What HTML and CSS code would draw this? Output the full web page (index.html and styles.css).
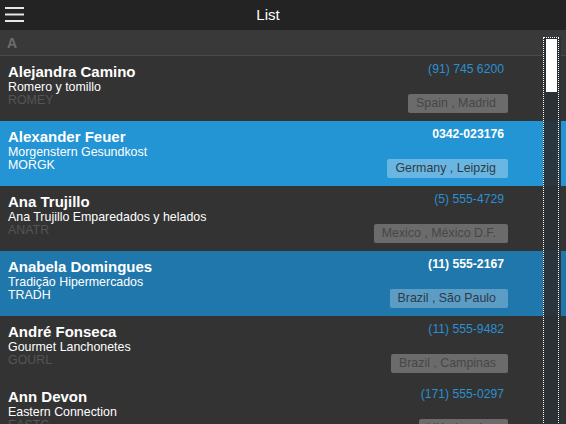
FILE: index.html
```html
<!DOCTYPE html>
<html>
<head>
<meta charset="utf-8">
<link rel="stylesheet" href="styles.css">
</head>
<body>
<div class="topbar">
  <div class="menu-btn">
    <svg width="20" height="18" viewBox="0 0 20 18"><rect x="0" y="1" width="19" height="2" fill="#e6e6e6"/><rect x="0" y="7.5" width="19" height="2" fill="#e6e6e6"/><rect x="0" y="14" width="19" height="2" fill="#e6e6e6"/></svg>
  </div>
  <div class="title">List</div>
</div>
<div class="list">
  <div class="group-header">A</div>

  <div class="row">
    <div class="info"><div class="name">Alejandra Camino</div><div class="company">Romero y tomillo</div><div class="code">ROMEY</div></div>
    <div class="side"><div class="phone">(91) 745 6200</div><div class="pill">Spain , Madrid</div></div>
    <svg class="chev" width="6" height="10" viewBox="0 0 6 10"><path d="M1 1 L5 5 L1 9" fill="none" stroke="#4c4c4c" stroke-width="1.5"/></svg>
  </div>

  <div class="row selected">
    <div class="info"><div class="name">Alexander Feuer</div><div class="company">Morgenstern Gesundkost</div><div class="code">MORGK</div></div>
    <div class="side"><div class="phone">0342-023176</div><div class="pill">Germany , Leipzig</div></div>
    <svg class="chev" width="6" height="10" viewBox="0 0 6 10"><path d="M1 1 L5 5 L1 9" fill="none" stroke="#4c4c4c" stroke-width="1.5"/></svg>
  </div>

  <div class="row">
    <div class="info"><div class="name">Ana Trujillo</div><div class="company">Ana Trujillo Emparedados y helados</div><div class="code">ANATR</div></div>
    <div class="side"><div class="phone">(5) 555-4729</div><div class="pill">Mexico , México D.F.</div></div>
    <svg class="chev" width="6" height="10" viewBox="0 0 6 10"><path d="M1 1 L5 5 L1 9" fill="none" stroke="#4c4c4c" stroke-width="1.5"/></svg>
  </div>

  <div class="row hover">
    <div class="info"><div class="name">Anabela Domingues</div><div class="company">Tradição Hipermercados</div><div class="code">TRADH</div></div>
    <div class="side"><div class="phone">(11) 555-2167</div><div class="pill">Brazil , São Paulo</div></div>
    <svg class="chev" width="6" height="10" viewBox="0 0 6 10"><path d="M1 1 L5 5 L1 9" fill="none" stroke="#4c4c4c" stroke-width="1.5"/></svg>
  </div>

  <div class="row">
    <div class="info"><div class="name">André Fonseca</div><div class="company">Gourmet Lanchonetes</div><div class="code">GOURL</div></div>
    <div class="side"><div class="phone">(11) 555-9482</div><div class="pill">Brazil , Campinas</div></div>
    <svg class="chev" width="6" height="10" viewBox="0 0 6 10"><path d="M1 1 L5 5 L1 9" fill="none" stroke="#4c4c4c" stroke-width="1.5"/></svg>
  </div>

  <div class="row">
    <div class="info"><div class="name">Ann Devon</div><div class="company">Eastern Connection</div><div class="code">EASTC</div></div>
    <div class="side"><div class="phone">(171) 555-0297</div><div class="pill">UK , London</div></div>
    <svg class="chev" width="6" height="10" viewBox="0 0 6 10"><path d="M1 1 L5 5 L1 9" fill="none" stroke="#4c4c4c" stroke-width="1.5"/></svg>
  </div>

  <div class="scroll">
    <div class="track"><div class="thumb"></div></div>
  </div>
</div>
</body>
</html>
```

FILE: styles.css
```css
html, body {
  margin: 0;
  padding: 0;
}
body {
  width: 566px;
  height: 424px;
  overflow: hidden;
  background: #333333;
  font-family: "Liberation Sans", Arial, sans-serif;
  color: #ffffff;
}
.topbar {
  height: 30px;
  background: #232323;
  display: flex;
  align-items: center;
}
.menu-btn {
  width: 28px;
  height: 30px;
  display: flex;
  align-items: center;
  padding-left: 5px;
  box-sizing: border-box;
}
.menu-btn svg {
  display: block;
  margin-top: -1px;
}
.title {
  flex: 1;
  text-align: center;
  padding-right: 58px;
  font-size: 15px;
  line-height: 30px;
  color: #ffffff;
}
.list {
  position: relative;
}
.group-header {
  height: 25px;
  box-sizing: border-box;
  background: #393939;
  border-bottom: 1px solid #4a4a4a;
  padding-left: 7px;
  font-size: 14px;
  font-weight: bold;
  line-height: 26px;
  color: #6d6d6d;
  height: 26px;
}
.row {
  position: relative;
  height: 65px;
  box-sizing: border-box;
  padding: 8px 58px 8px 8px;
  display: flex;
  justify-content: space-between;
  background: #333333;
}
.row.selected {
  background: #2394d4;
}
.row.hover {
  background: #1f77ab;
}
.info {
  display: flex;
  flex-direction: column;
}
.name {
  font-size: 15px;
  font-weight: bold;
  line-height: 16px;
}
.company {
  font-size: 12.4px;
  line-height: 14px;
}
.code {
  font-size: 12.4px;
  line-height: 13px;
  color: #555555;
}
.selected .code, .hover .code {
  color: #ffffff;
}
.side {
  display: flex;
  flex-direction: column;
  align-items: flex-end;
  justify-content: space-between;
}
.phone {
  font-size: 12.2px;
  line-height: 14px;
  margin-top: -2px;
  margin-right: 4px;
  color: #2a90d2;
}
.selected .phone, .hover .phone {
  color: #ffffff;
  font-weight: bold;
}
.pill {
  height: 19px;
  line-height: 19px;
  font-size: 12.4px;
  padding: 0 12px 0 8px;
  border-radius: 2px;
  background: #6b6b6b;
  color: #474747;
}
.selected .pill {
  background: #6ab6e3;
  color: #2f3b44;
}
.hover .pill {
  background: #5c9dc6;
  color: #2d3a44;
}
.chev {
  position: absolute;
  right: 14px;
  top: 28px;
}
.scroll {
  position: absolute;
  left: 543px;
  top: 7px;
  width: 18px;
  height: 420px;
  background: rgba(44, 49, 54, 0.94);
}
.track {
  width: 16px;
  height: 100%;
  box-sizing: border-box;
  border: 1px dotted #ffffff;
  padding: 1px 1px 0 2px;
}
.thumb {
  width: 11px;
  height: 53px;
  background: #ffffff;
}
```
